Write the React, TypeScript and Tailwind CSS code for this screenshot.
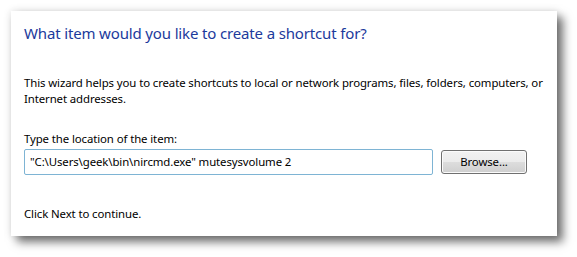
export default function App() {
  return (
    <div className="w-[577px] h-[257px] bg-white pl-[11px] pt-[11px]" style={{ fontFamily: "'Noto Sans', sans-serif" }}>
      <div className="w-[546px] h-[225px] bg-white shadow-[0_0_8px_rgba(0,0,0,0.12),6px_6px_9px_rgba(0,0,0,0.55)] pl-[13px] pt-[11px] text-[11.4px] tracking-[-0.1px] text-black">
        {/* Main instruction */}
        <h1 className="text-[15px] leading-[22px] tracking-[-0.15px] text-[#1c3a9c]">What item would you like to create a shortcut for?</h1>

        <p className="mt-[31px] leading-[16px] w-[525px]">
          This wizard helps you to create shortcuts to local or network programs, files, folders, computers, or Internet addresses.
        </p>

        <p className="mt-[24px] leading-[16px]">Type the location of the item:</p>

        <div className="mt-[2px] flex items-center gap-[8px]">
          <div className="w-[409px] h-[26px] border border-[#7eb4d4] rounded-[2px] flex items-center pl-[5px]">
            "C:\Users\geek\bin\nircmd.exe" mutesysvolume 2
          </div>
          <button className="w-[86px] h-[24px] rounded-[3px] border border-[#707070] bg-[linear-gradient(#f2f2f2,#ebebeb_50%,#dddddd_50%,#cfcfcf)] shadow-[inset_0_0_0_1px_#fbfbfb] text-[11.4px]">
            Browse...
          </button>
        </div>

        <p className="mt-[31px] leading-[16px]">Click Next to continue.</p>
      </div>
    </div>
  );
}
